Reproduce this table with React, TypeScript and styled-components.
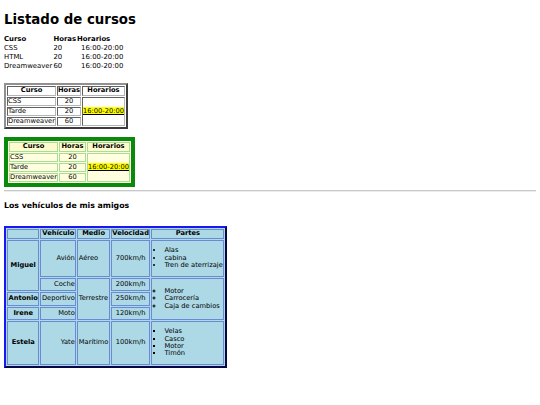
import React from "react";
import styled, { createGlobalStyle } from "styled-components";

const Global = createGlobalStyle`
  html, body { background: #fff; }
  body {
    margin: 4px;
    font-family: "DejaVu Sans", Verdana, sans-serif;
    font-size: 6.9px;
    color: #000;
  }
`;

const Title = styled.h1`
  font-size: 13.33px;
  font-weight: bold;
  margin: 8.4px 0 8px 0;
`;

const Subtitle = styled.h3`
  font-size: 7.8px;
  font-weight: bold;
  margin: 8.5px 0 0 0;
`;

const Rule = styled.hr`
  margin: 3px 0 0 0;
  border: none;
  border-top: 1px solid #c8c8c8;
  border-bottom: 1px solid #ececec;
`;

const BaseTable = styled.table`
  border-collapse: separate;
  border-spacing: 1px;
  font-size: 6.7px;
  margin: 0 0 8px 0;
  td, th { padding: 0; line-height: 7.25px; }
  th { font-weight: bold; }
`;

const PlainTable = styled(BaseTable)`
  border-spacing: 0;
  font-size: 6.9px;
  margin: 0 0 12px 0;
  td, th { padding: 0.75px 1px 0.75px 0; line-height: 7.5px; }
  th { text-align: left; }
  td:nth-child(3) { padding-left: 4px; }
`;

const GrayTable = styled(BaseTable)`
  border: 2px outset #909090;
  background: #fff;
  td, th { border: 1px inset #b4b4b4; }
  th { text-align: center; }
`;

const GreenTable = styled(BaseTable)`
  border: 4px solid #0a8a0a;
  background: #ffffe0;
  margin: 0;
  td, th { border: 1px solid #a8dd98; }
  th { text-align: center; padding: 0 1.5px; background: #fffacd; }
`;

const Cell = styled.td<{ $align?: string }>`
  text-align: ${(p) => p.$align || "left"};
  vertical-align: middle;
`;

const Mark = styled.u`
  background: #ffff00;
`;

const BlueTable = styled.table`
  border-collapse: separate;
  border-spacing: 1px;
  border: 2px outset #10109c;
  background: #add8e6;
  font-size: 6.7px;
  margin-top: 16px;
  td, th {
    border: 1px solid #6a8ad4;
    line-height: 7.5px;
  }
  td { padding: 2px 0.5px; }
  th { font-weight: bold; text-align: center; padding: 0.5px 0.5px; }
`;

const BCell = styled.td<{ $align?: string }>`
  text-align: ${(p) => p.$align || "left"};
  vertical-align: middle;
`;

const Parts = styled.ul<{ $type: string }>`
  list-style-type: ${(p) => p.$type};
  margin: 4px 0;
  padding-left: 11.5px;
  li { line-height: 7.4px; }
`;

export default function App() {
  return (
    <>
      <Global />
      <Title>Listado de cursos</Title>
      <PlainTable>
        <thead>
          <tr><th>Curso</th><th>Horas</th><th>Horarios</th></tr>
        </thead>
        <tbody>
          <tr><td>CSS</td><td>20</td><td>16:00-20:00</td></tr>
          <tr><td>HTML</td><td>20</td><td>16:00-20:00</td></tr>
          <tr><td>Dreamweaver</td><td>60</td><td>16:00-20:00</td></tr>
        </tbody>
      </PlainTable>

      <GrayTable>
        <thead>
          <tr><th>Curso</th><th>Horas</th><th>Horarios</th></tr>
        </thead>
        <tbody>
          <tr>
            <Cell>CSS</Cell><Cell $align="center">20</Cell>
            <Cell rowSpan={3} $align="center"><Mark>16:00-20:00</Mark></Cell>
          </tr>
          <tr><Cell>Tarde</Cell><Cell $align="center">20</Cell></tr>
          <tr><Cell>Dreamweaver</Cell><Cell $align="center">60</Cell></tr>
        </tbody>
      </GrayTable>

      <GreenTable>
        <thead>
          <tr><th>Curso</th><th>Horas</th><th>Horarios</th></tr>
        </thead>
        <tbody>
          <tr>
            <Cell>CSS</Cell><Cell $align="center">20</Cell>
            <Cell rowSpan={3} $align="center"><Mark>16:00-20:00</Mark></Cell>
          </tr>
          <tr><Cell>Tarde</Cell><Cell $align="center">20</Cell></tr>
          <tr><Cell>Dreamweaver</Cell><Cell $align="center">60</Cell></tr>
        </tbody>
      </GreenTable>

      <Rule />
      <Subtitle>Los vehículos de mis amigos</Subtitle>

      <BlueTable>
        <thead>
          <tr><th></th><th>Vehículo</th><th>Medio</th><th>Velocidad</th><th>Partes</th></tr>
        </thead>
        <tbody>
          <tr>
            <th rowSpan={2}>Miguel</th>
            <BCell $align="right">Avión</BCell>
            <BCell>Aéreo</BCell>
            <BCell $align="center">700km/h</BCell>
            <BCell>
              <Parts $type="disc"><li>Alas</li><li>cabina</li><li>Tren de aterrizaje</li></Parts>
            </BCell>
          </tr>
          <tr>
            <BCell $align="right">Coche</BCell>
            <BCell rowSpan={3}>Terrestre</BCell>
            <BCell $align="center">200km/h</BCell>
            <BCell rowSpan={3}>
              <Parts $type="circle"><li>Motor</li><li>Carrocería</li><li>Caja de cambios</li></Parts>
            </BCell>
          </tr>
          <tr>
            <th>Antonio</th>
            <BCell $align="right">Deportivo</BCell>
            <BCell $align="center">250km/h</BCell>
          </tr>
          <tr>
            <th>Irene</th>
            <BCell $align="right">Moto</BCell>
            <BCell $align="center">120km/h</BCell>
          </tr>
          <tr>
            <th>Estela</th>
            <BCell $align="right">Yate</BCell>
            <BCell>Marítimo</BCell>
            <BCell $align="center">100km/h</BCell>
            <BCell>
              <Parts $type="square"><li>Velas</li><li>Casco</li><li>Motor</li><li>Timón</li></Parts>
            </BCell>
          </tr>
        </tbody>
      </BlueTable>
    </>
  );
}
